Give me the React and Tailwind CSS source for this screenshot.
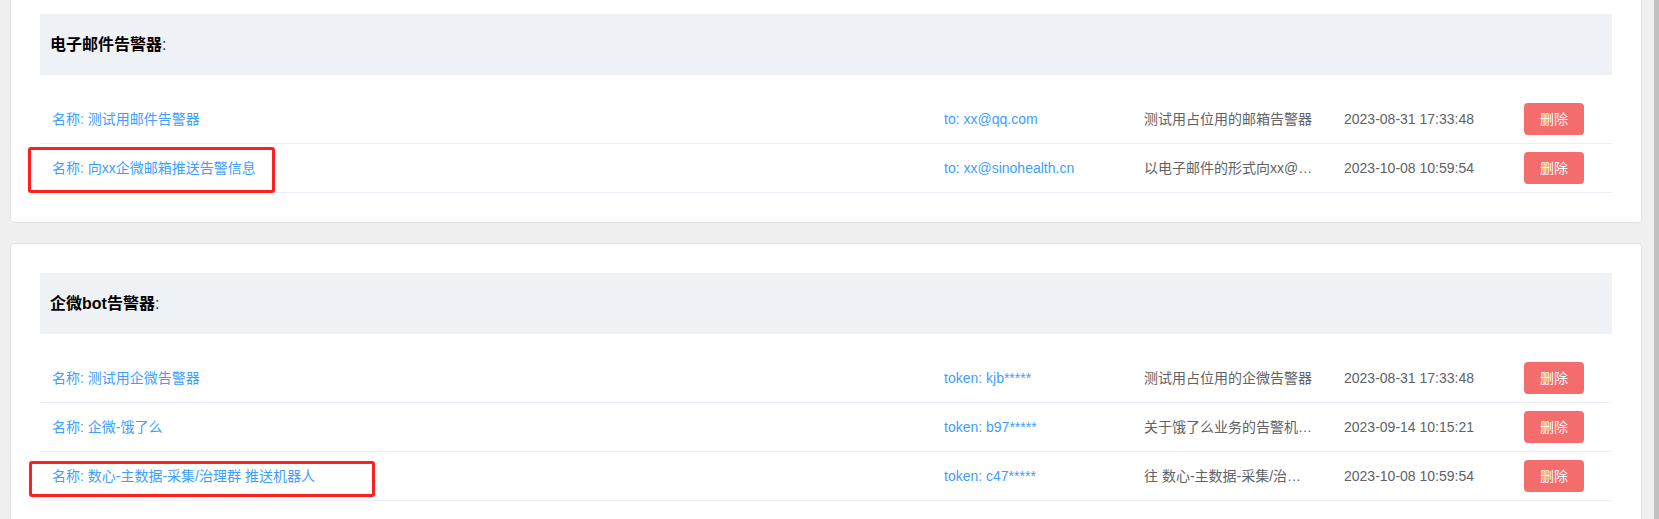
import React from "react";

const emailAlerters = [
  {
    name: "测试用邮件告警器",
    target: "to: xx@qq.com",
    desc: "测试用占位用的邮箱告警器",
    time: "2023-08-31 17:33:48",
  },
  {
    name: "向xx企微邮箱推送告警信息",
    target: "to: xx@sinohealth.cn",
    desc: "以电子邮件的形式向xx@sinohealth.cn推送告警信息",
    time: "2023-10-08 10:59:54",
    mark: "email",
  },
];

const botAlerters = [
  {
    name: "测试用企微告警器",
    target: "token: kjb*****",
    desc: "测试用占位用的企微告警器",
    time: "2023-08-31 17:33:48",
  },
  {
    name: "企微-饿了么",
    target: "token: b97*****",
    desc: "关于饿了么业务的告警机器人",
    time: "2023-09-14 10:15:21",
  },
  {
    name: "数心-主数据-采集/治理群 推送机器人",
    target: "token: c47*****",
    desc: "往 数心-主数据-采集/治理群 推送告警信息",
    time: "2023-10-08 10:59:54",
    mark: "bot",
  },
];

// red annotation boxes drawn over the screenshot
const Mark = ({ kind }) =>
  kind === "email" ? (
    <div className="pointer-events-none absolute left-[-12px] top-[3px] h-[46px] w-[247px] rounded-[3px] border-[3px] border-[#fe1f1f]" />
  ) : (
    <div className="pointer-events-none absolute left-[-11px] top-[9px] h-[36px] w-[346px] rounded-[3px] border-[3px] border-[#fe1f1f]" />
  );

const AlerterRow = ({ item }) => (
  <div className="relative flex h-[49px] items-center border-b border-[#ebeef5] pl-3 text-[14px]">
    <div className="flex-1 truncate text-[#409eff]">名称: {item.name}</div>
    <div className="w-[200px] truncate text-[#409eff]">{item.target}</div>
    <div className="w-[200px] truncate pr-[30px] text-[#606266]">{item.desc}</div>
    <div className="w-[180px] text-[#606266]">{item.time}</div>
    <div className="w-[88px]">
      <button className="h-[32px] w-[60px] rounded-[4px] bg-[#f56c6c] text-[14px] text-white">
        删除
      </button>
    </div>
    {item.mark && <Mark kind={item.mark} />}
  </div>
);

const AlerterCard = ({ title, items, className }) => (
  <div
    className={
      "rounded-[4px] border border-[#e2e2e2] bg-white p-[29px] " + (className || "")
    }
  >
    <div className="flex h-[61px] items-center bg-[#eef1f5] pl-[10px] text-[16px] text-[#303133]">
      <b className="font-bold text-black">{title}</b>:
    </div>
    <div className="mt-[20px]">
      {items.map((item, i) => (
        <AlerterRow key={i} item={item} />
      ))}
    </div>
  </div>
);

export default function App() {
  return (
    <div
      className="flex h-[519px] w-full overflow-hidden bg-[#efefef]"
      style={{ fontFamily: '"Liberation Sans", Arial, "Noto Sans CJK SC", sans-serif' }}
    >
      <div className="flex-1 pl-[10px] pr-[12px]">
        <div className="mt-[-16px]">
          <AlerterCard title="电子邮件告警器" items={emailAlerters} />
          <AlerterCard title="企微bot告警器" items={botAlerters} className="mt-[20px]" />
        </div>
      </div>
      <div className="w-[5px] bg-[#c1c1c1]" />
    </div>
  );
}
